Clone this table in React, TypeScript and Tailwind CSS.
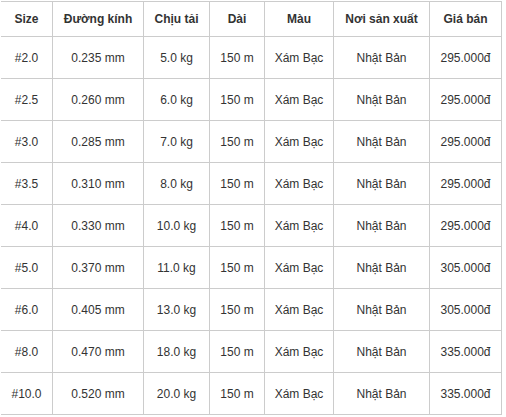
import React from "react";

const headers = ["Size", "Đường kính", "Chịu tải", "Dài", "Màu", "Nơi sản xuất", "Giá bán"];
const rows: string[][] = [
  ["#2.0", "0.235 mm", "5.0 kg", "295.000đ"],
  ["#2.5", "0.260 mm", "6.0 kg", "295.000đ"],
  ["#3.0", "0.285 mm", "7.0 kg", "295.000đ"],
  ["#3.5", "0.310 mm", "8.0 kg", "295.000đ"],
  ["#4.0", "0.330 mm", "10.0 kg", "295.000đ"],
  ["#5.0", "0.370 mm", "11.0 kg", "305.000đ"],
  ["#6.0", "0.405 mm", "13.0 kg", "305.000đ"],
  ["#8.0", "0.470 mm", "18.0 kg", "335.000đ"],
  ["#10.0", "0.520 mm", "20.0 kg", "335.000đ"],
];

export default function App() {
  return (
    <div
      className="w-[506px] h-[417px] bg-white overflow-hidden text-[12px] text-[#333333]"
      style={{ fontFamily: '"Liberation Sans", Arial, sans-serif' }}
    >
      <div className="ml-[1px] mt-[1px] w-[501px] grid grid-cols-[52px_91px_66px_55px_69px_96px_72px] border-t border-[#cccccc]">
        {headers.map((h) => (
          <div
            key={h}
            className="h-[35px] flex items-center justify-center font-bold border-r border-b border-[#cccccc]"
          >
            {h}
          </div>
        ))}
        {rows.map((r) => {
          const cells = [r[0], r[1], r[2], "150 m", "Xám Bạc", "Nhật Bản", r[3]];
          return cells.map((c, i) => (
            <div
              key={r[0] + i}
              className="h-[42px] flex items-center justify-center border-r border-b border-[#cccccc]"
            >
              {c}
            </div>
          ));
        })}
      </div>
    </div>
  );
}
